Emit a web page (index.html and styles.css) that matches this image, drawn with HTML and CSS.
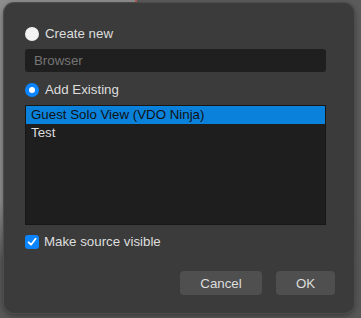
FILE: index.html
```html
<!DOCTYPE html>
<html lang="en">
<head>
  <meta charset="UTF-8" />
  <title>Add Source</title>
  <link rel="stylesheet" href="styles.css">
</head>
<body>
  <div class="dialog">
    <div class="form">
      <label class="option">
        <span class="radio"></span>
        Create new
      </label>

      <div class="name-input">Browser</div>

      <label class="option">
        <span class="radio checked"></span>
        Add Existing
      </label>

      <ul class="source-list">
        <li class="selected">Guest Solo View (VDO Ninja)</li>
        <li>Test</li>
      </ul>

      <label class="option visible-option">
        <span class="checkbox">
          <svg width="10" height="10" viewBox="0 0 10 10">
            <path d="M1.6 5.3 L4 7.7 L8.6 1.8" fill="none" stroke="#fff" stroke-width="1.8" stroke-linecap="round" stroke-linejoin="round"/>
          </svg>
        </span>
        Make source visible
      </label>
    </div>

    <div class="buttons">
      <button class="btn cancel">Cancel</button>
      <button class="btn ok">OK</button>
    </div>
  </div>
</body>
</html>
```

FILE: styles.css
```css
* {
  box-sizing: border-box;
  margin: 0;
  padding: 0;
}

body {
  width: 361px;
  height: 318px;
  overflow: hidden;
  padding: 3px 7px 5px 4px;
  font-family: 'Liberation Sans', Arial, sans-serif;
  font-size: 13.3px;
  color: #dedede;
  background:
    linear-gradient(to bottom, transparent 0 200px, #575757 260px),
    linear-gradient(to right, #8d8d8d 0 135px, #b35a5e 135px 137px, #5b5b5b 137px);
}

.dialog {
  width: 350px;
  height: 310px;
  background: #3b3b3b;
  border-radius: 10px;
  box-shadow: 0 0 0 1px #4c4c4c, 0 2px 6px rgba(0, 0, 0, 0.45);
  padding: 22px 19px 0 21px;
  display: flex;
  flex-direction: column;
}

.form {
  width: 301px;
  display: flex;
  flex-direction: column;
}

.option {
  height: 18px;
  display: flex;
  align-items: center;
  gap: 6px;
  line-height: 18px;
}

.radio {
  width: 14px;
  height: 14px;
  border-radius: 50%;
  background: #f2f2f2;
  display: flex;
  align-items: center;
  justify-content: center;
}

.radio.checked {
  background: #0a84ff;
}

.radio.checked::after {
  content: "";
  width: 6px;
  height: 6px;
  border-radius: 50%;
  background: #ffffff;
}

.name-input {
  margin-top: 6px;
  height: 23px;
  line-height: 23px;
  padding-left: 9px;
  background: #1f1f1f;
  border-radius: 3px;
  color: #757575;
}

.name-input + .option {
  margin-top: 9px;
}

.source-list {
  list-style: none;
  margin-top: 6px;
  height: 120px;
  background: #1e1e1e;
  border: 1px solid #171717;
}

.source-list li {
  height: 18px;
  line-height: 18px;
  padding-left: 5px;
  color: #dcdcdc;
}

.source-list li.selected {
  background: #0a82dc;
  color: #111111;
}

.visible-option {
  margin-top: 8px;
  gap: 5px;
}

.checkbox {
  width: 14px;
  height: 14px;
  border-radius: 3px;
  background: #0a84ff;
  display: flex;
  align-items: center;
  justify-content: center;
}

.buttons {
  margin-top: 20px;
  display: flex;
  justify-content: flex-end;
  gap: 14px;
}

.btn {
  height: 24px;
  border: none;
  border-radius: 4px;
  background: #4f4f4f;
  color: #dedede;
  font-family: 'Liberation Sans', Arial, sans-serif;
  font-size: 13.3px;
}

.cancel {
  width: 82px;
}

.ok {
  width: 59px;
}
```
